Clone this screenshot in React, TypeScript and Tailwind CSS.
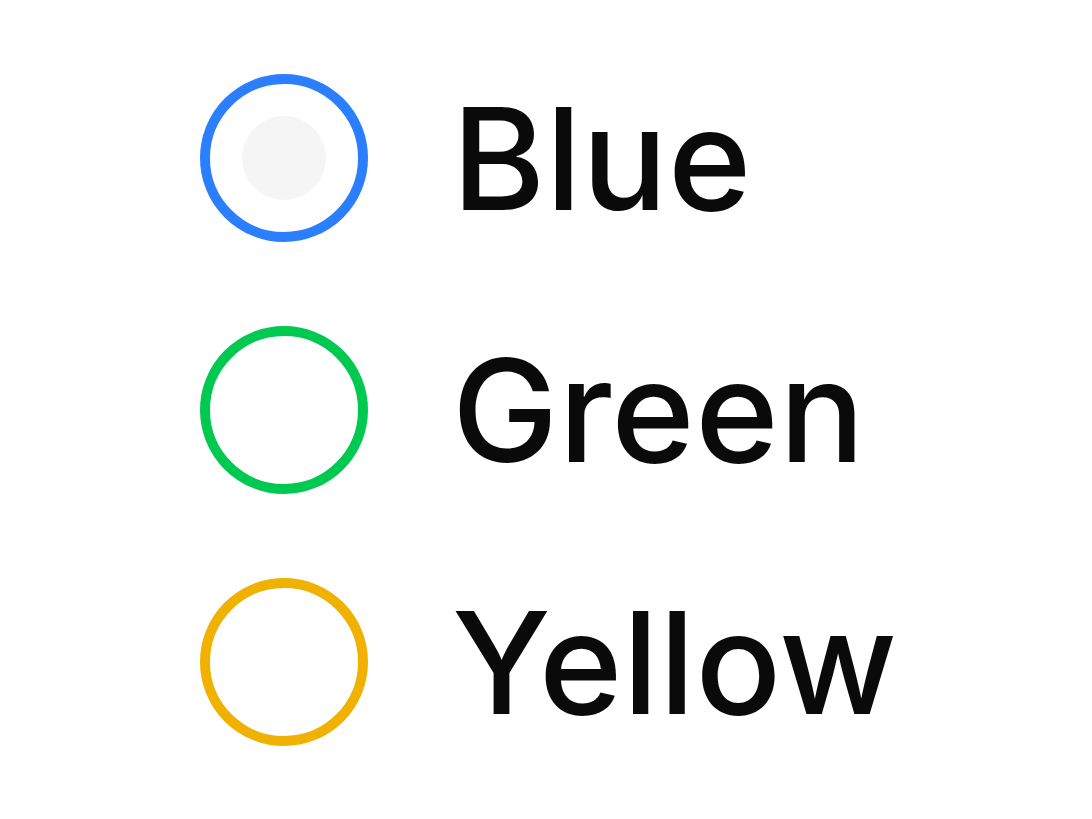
const options = [
  { label: "Blue", ring: "border-blue-500", checked: true },
  { label: "Green", ring: "border-green-500", checked: false },
  { label: "Yellow", ring: "border-yellow-500", checked: false },
];

export default function App() {
  return (
    <div className="flex min-h-screen items-center justify-center bg-white font-['Inter',sans-serif] text-neutral-950">
      <div className="flex w-[692px] flex-col gap-[84px]">
        {options.map((o) => (
          <label key={o.label} className="flex h-[168px] items-center gap-[84px]">
            <span
              className={`flex h-[168px] w-[168px] shrink-0 items-center justify-center rounded-full border-[10px] bg-white ${o.ring}`}
            >
              {o.checked && <span className="h-[84px] w-[84px] rounded-full bg-neutral-100" />}
            </span>
            <span className="text-[142px] leading-none font-medium tracking-[0.5px]">{o.label}</span>
          </label>
        ))}
      </div>
    </div>
  );
}
